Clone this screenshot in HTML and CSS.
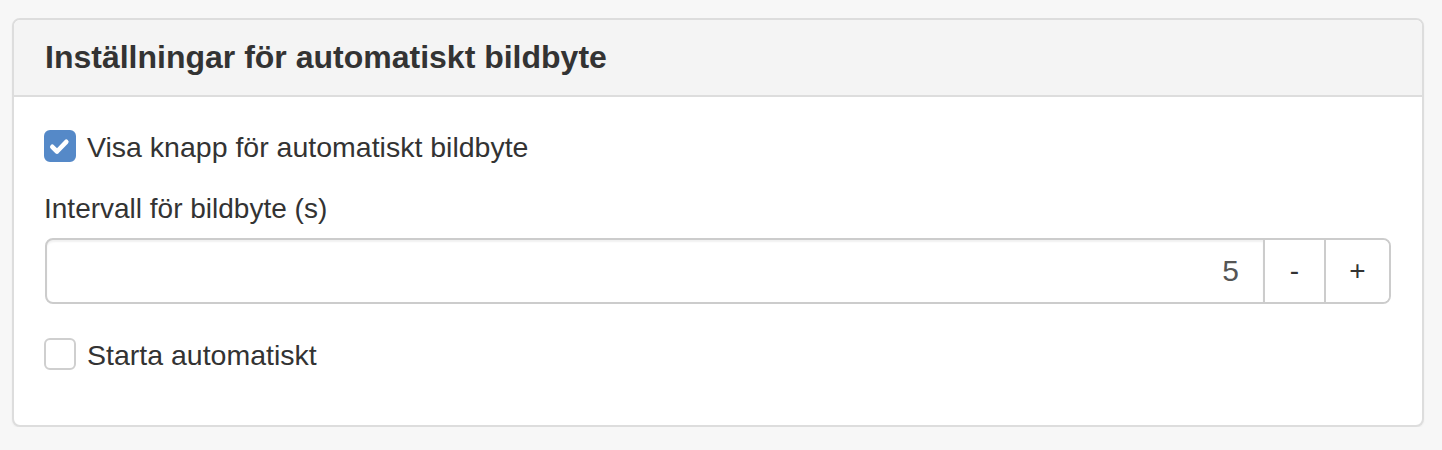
FILE: index.html
```html
<!DOCTYPE html>
<html lang="sv">
<head>
    <meta charset="UTF-8">
    <title>Inställningar för automatiskt bildbyte</title>
    <link rel="stylesheet" href="styles.css">
</head>
<body>
    <div class="page">
        <div class="panel">
            <div class="panel-heading">
                <h3>Inställningar för automatiskt bildbyte</h3>
            </div>
            <div class="panel-body">
                <label class="check-row">
                    <span class="box checked">
                        <svg viewBox="0 0 32 32" width="32" height="32"><path d="M8.3 16.8 L13 21.5 L22.3 11.8" fill="none" stroke="#fff" stroke-width="4.6" stroke-linecap="round" stroke-linejoin="round"/></svg>
                    </span>
                    <span class="check-text">Visa knapp för automatiskt bildbyte</span>
                </label>
                <div class="field-label">Intervall för bildbyte (s)</div>
                <div class="input-group">
                    <div class="input-value">5</div>
                    <button class="step">-</button>
                    <button class="step">+</button>
                </div>
                <label class="check-row last">
                    <span class="box"></span>
                    <span class="check-text">Starta automatiskt</span>
                </label>
            </div>
        </div>
    </div>
</body>
</html>
```

FILE: styles.css
```css
* {
    box-sizing: border-box;
    margin: 0;
    padding: 0;
}

body {
    font-family: "Liberation Sans", Arial, Helvetica, sans-serif;
    color: #333;
    background-color: #f7f7f7;
}

.page {
    padding: 18px 18px 0 12px;
}

.panel {
    background: #fff;
    border: 2px solid #dddddd;
    border-radius: 8px;
    box-shadow: 0 1px 2px rgba(0,0,0,0.05);
}

.panel-heading {
    background-color: #f4f4f4;
    border-bottom: 2px solid #dddddd;
    border-radius: 6px 6px 0 0;
    height: 77px;
    display: flex;
    align-items: center;
    padding: 0 31px;
}

.panel-heading h3 {
    font-size: 32px;
    font-weight: bold;
    color: #333;
}

.panel-body {
    padding: 33px 31px 55px 30px;
    display: flex;
    flex-direction: column;
}

.check-row {
    display: flex;
    align-items: center;
    gap: 11px;
    height: 32px;
    font-size: 28.5px;
}

.check-text {
    padding-top: 3px;
}

.check-row.last {
    margin-top: 34px;
}

.box {
    width: 32px;
    height: 32px;
    border: 2px solid #cfcfcf;
    border-radius: 6px;
    background: #fff;
    display: flex;
}

.box.checked {
    background: #5589c8;
    border-color: #5589c8;
}

.box svg {
    margin: -2px;
}

.field-label {
    margin-top: 28px;
    font-size: 28px;
    line-height: 38px;
}

.input-group {
    margin-top: 10px;
    display: flex;
    height: 66px;
    margin-left: 1px;
    border: 2px solid #cccccc;
    border-radius: 8px;
}

.input-value {
    flex: 1;
    text-align: right;
    font-size: 30px;
    line-height: 62px;
    padding-right: 24px;
    color: #555;
    border-radius: 6px 0 0 6px;
    box-shadow: inset 0 2px 2px rgba(0,0,0,0.06);
}

.step {
    width: 61px;
    border: none;
    border-left: 2px solid #cccccc;
    background: #fff;
    color: #333;
    font-family: inherit;
    font-size: 28px;
}

.step:last-child {
    width: 65px;
    border-radius: 0 6px 6px 0;
}
```
